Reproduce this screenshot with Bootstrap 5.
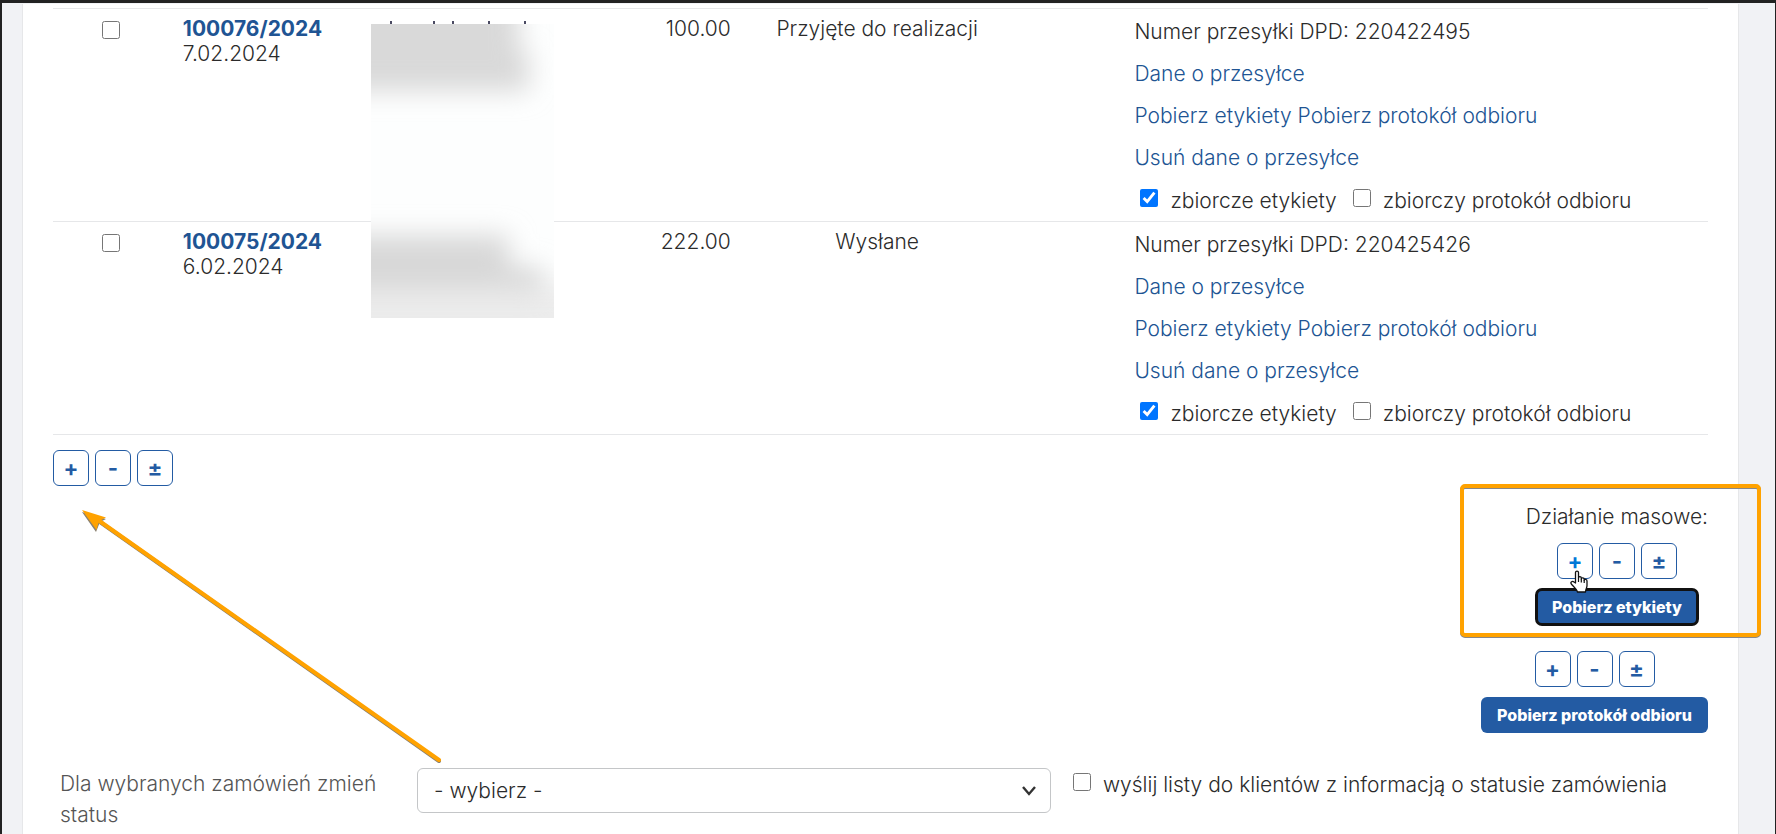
<!DOCTYPE html>
<html lang="pl">
<head>
<meta charset="utf-8">
<meta name="viewport" content="width=device-width, initial-scale=1">
<title>Zamówienia</title>
<link href="https://cdn.jsdelivr.net/npm/bootstrap@5.3.0/dist/css/bootstrap.min.css" rel="stylesheet">
<style>
body { font-family: Inter, sans-serif; font-size: 21px; font-weight: 300; line-height: 25px; color: #2b2b2b; background: #f1f2f5; border: 2px solid #222; border-top-width: 3px; border-right-width: 1px; border-bottom: 0; height: 100vh; overflow: hidden; padding: 1px 36px 0 20px; }
a { color: #205493; text-decoration: none; }
.sheet { background: #fff; border: 1px solid #e6e7e9; border-width: 0 1px; padding: 4px 30px 24px; }
.orders { width: 100%; table-layout: fixed; }
.orders tr { border: 1px solid #e6e7e9; border-width: 1px 0; }
.orders td { vertical-align: top; padding: 7px 14px 0; }
.orders td.shipment { padding: 2px 0 0 14px; line-height: 42px; }
.sheet input[type=checkbox] { width: 18px; height: 18px; margin: 0; flex: none; }
.orders .pick input { display: block; margin: 5px auto 0; }
.shipment .bundle { padding-top: 1px; margin-bottom: -1px; }
.shipment label input[type=checkbox] { margin: 0 12px 0 6px; vertical-align: 1px; }
.shipment label + label input[type=checkbox] { margin-left: 16px; }
.number { font-weight: 700; }
.client { position: relative; }
.redacted { position: absolute; left: 12px; top: 12px; width: 183px; height: 297px; z-index: 1; }
.redacted svg { display: block; }
.tools { gap: 6px; }
.tool { position: relative; width: 36px; height: 36px; padding: 0; font-size: 22px; font-weight: 700; line-height: 24px; color: #235ba3; background: #fff; border: 1px solid #235ba3; border-radius: 6px; }
.tool.hovered { color: #0078d7; }
.action { height: 36px; padding: 0 16px; font-size: 16px; font-weight: 800; line-height: 24px; color: #fff; background: #235ba3; border: 0; border-radius: 6px; }
.action.focused { outline: 3px solid #111; outline-offset: -2px; }
.bulk { margin-top: 15px; }
.mass { position: relative; margin-top: 54px; }
.group { gap: 10px; }
.group.first { margin: 14px 10px 26px 0; }
.marker { position: absolute; right: -53px; top: -20px; width: 301px; height: 153px; border: 4px solid #ffa200; border-radius: 5px; filter: drop-shadow(0 1px 0 #888); pointer-events: none; }
.hand { position: absolute; left: 12px; top: 26px; z-index: 2; }
.arrow { position: absolute; left: 25px; top: 55px; pointer-events: none; }
.status { margin-top: 35px; }
.caption { width: 22%; padding: 0 7px; line-height: 31px; color: #555; }
.choice { width: 38.3%; }
.mailing { padding: 1px 0 0 22px; line-height: 31px; gap: 12px; }
.mailing input[type=checkbox] { margin-top: 4px; }
.choice .form-select { height: 45px; font-size: 21px; font-weight: 300; line-height: 25px; color: #2b2b2b; border: 1px solid #c4c6c8; border-radius: 6px; padding: 0 16px; background-image: url("data:image/svg+xml,%3Csvg xmlns='http://www.w3.org/2000/svg' viewBox='0 0 16 12'%3E%3Cpath d='M2 2l6 7 6-7' fill='none' stroke='%23333' stroke-width='2.4'/%3E%3C/svg%3E"); background-size: 16px 12px; background-position: right 13px center; }
</style>
</head>
<body>
<main class="sheet">
<table class="orders">
<colgroup><col style="width:7%"><col style="width:11.5%"><col style="width:13%"><col style="width:10.3%"><col style="width:16%"><col style="width:6.7%"><col></colgroup>
<tbody>
<tr>
<td class="pick"><input type="checkbox" aria-label="Zamówienie 100076/2024"></td>
<td><a class="number" href="#">100076/2024</a><br>7.02.2024</td>
<td class="client"><div class="redacted" aria-hidden="true">
<svg width="183" height="297" viewBox="0 0 183 297">
<defs><filter id="soft" filterUnits="userSpaceOnUse" x="-80" y="-80" width="360" height="480"><feGaussianBlur stdDeviation="13"/></filter><clipPath id="pane"><path d="M0 3h183v294H0z"/></clipPath></defs>
<path d="M0 3h183v294H0z" fill="#fdfefe"/>
<path d="M19 0h2v3h-2zM62 0h2v3h-2zM81 0h2v3h-2zM117 0h2v3h-2zM153 0h2v3h-2z" fill="#4a4a62"/>
<g clip-path="url(#pane)"><path filter="url(#soft)" fill="#d9d9d9" d="M-60-60H148V30H158V70H-60z"/><path filter="url(#soft)" fill="#ececec" d="M-60 264H240V350H-60z"/><path filter="url(#soft)" fill="#d8d8d8" d="M-60 214H138V246H172V272H-60z"/></g>
</svg></div></td>
<td class="text-end">100.00</td>
<td class="text-center px-0">Przyjęte do realizacji</td>
<td></td>
<td class="shipment">Numer przesyłki DPD: 220422495<br><a href="#">Dane o przesyłce</a><br><a href="#">Pobierz etykiety</a> <a href="#">Pobierz protokół odbioru</a><br><a href="#">Usuń dane o przesyłce</a>
<div class="bundle d-flex"><label><input type="checkbox" checked>zbiorcze etykiety</label><label><input type="checkbox">zbiorczy protokół odbioru</label></div></td>
</tr>
<tr>
<td class="pick"><input type="checkbox" aria-label="Zamówienie 100075/2024"></td>
<td><a class="number" href="#">100075/2024</a><br>6.02.2024</td>
<td></td>
<td class="text-end">222.00</td>
<td class="text-center px-0">Wysłane</td>
<td></td>
<td class="shipment">Numer przesyłki DPD: 220425426<br><a href="#">Dane o przesyłce</a><br><a href="#">Pobierz etykiety</a> <a href="#">Pobierz protokół odbioru</a><br><a href="#">Usuń dane o przesyłce</a>
<div class="bundle d-flex"><label><input type="checkbox" checked>zbiorcze etykiety</label><label><input type="checkbox">zbiorczy protokół odbioru</label></div></td>
</tr>
</tbody>
</table>

<section class="bulk d-flex justify-content-between align-items-start">
<div class="tools d-flex position-relative">
<button type="button" class="tool">+</button><button type="button" class="tool">-</button><button type="button" class="tool">±</button>
<svg class="arrow" width="370" height="265" viewBox="0 0 370 265">
<g fill="#8a8070" stroke="#8a8070" transform="translate(0 1)"><path d="M22 16L361 255" stroke-width="4" stroke-linecap="round"/><path d="M4 6L28 13L22 16L18 26z" stroke="none"/></g>
<g fill="#ffa200" stroke="#ffa200"><path d="M20 15L361 255" stroke-width="4" stroke-linecap="round"/><path d="M4 5L28 12.500L21 16L18.500 25z" stroke="none"/></g>
</svg>
</div>
<div class="mass d-flex flex-column align-items-end">
<div>Działanie masowe:</div>
<div class="group first d-flex flex-column align-items-center">
<div class="tools d-flex">
<button type="button" class="tool hovered">+<svg class="hand" width="18" height="23" viewBox="0 0 18 23"><path d="M5.500 13V2.500C5.500.6 8.500.6 8.500 2.500V8C8.500 6 11.300 6.200 11.300 8V9C11.300 7.300 14.200 7.500 14.200 9.300V10.300C14.200 8.700 17 9 17 11V15.500C17 18 15.500 19 15.500 22H7.500C7 19.500 4.500 17.500 1.300 14C0 12 2.500 10.500 4 12z" fill="#fff" stroke="#111" stroke-width="1.300" stroke-linejoin="round"/><path d="M8.500 8v4M11.300 9v3.500M14.200 10v3" stroke="#111" stroke-width="1.200"/></svg></button><button type="button" class="tool">-</button><button type="button" class="tool">±</button>
</div>
<button type="button" class="action focused">Pobierz etykiety</button>
</div>
<div class="group d-flex flex-column align-items-center">
<div class="tools d-flex">
<button type="button" class="tool">+</button><button type="button" class="tool">-</button><button type="button" class="tool">±</button>
</div>
<button type="button" class="action">Pobierz protokół odbioru</button>
</div>
<div class="marker"></div>
</div>
</section>

<form class="status d-flex align-items-start">
<label class="caption" for="state">Dla wybranych zamówień zmień status</label>
<div class="choice"><select class="form-select" id="state"><option>- wybierz -</option></select></div>
<label class="mailing d-flex"><input type="checkbox">wyślij listy do klientów z informacją o statusie zamówienia</label>
</form>
</main>
<script src="https://cdn.jsdelivr.net/npm/bootstrap@5.3.0/dist/js/bootstrap.bundle.min.js"></script>
</body>
</html>
